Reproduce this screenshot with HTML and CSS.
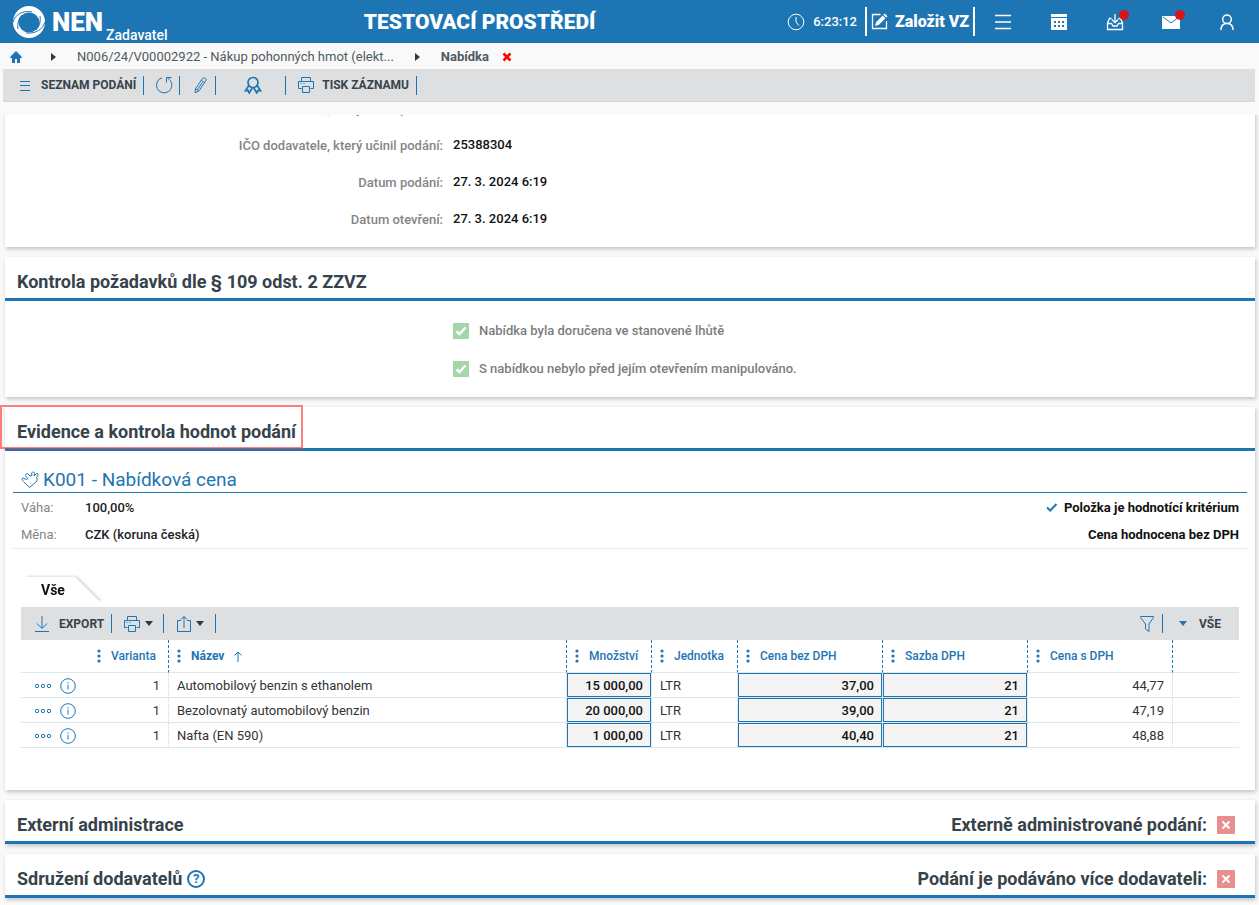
FILE: index.html
```html
<!DOCTYPE html>
<html lang="cs">
<head>
  <meta charset="UTF-8" />
  <meta name="viewport" content="width=device-width, initial-scale=1.0" />
  <title>NEN - Nabídka</title>
  <link rel="stylesheet" href="styles.css">
</head>
<body>

  <!-- Sdílené ikony -->
  <svg class="sprite" aria-hidden="true">
    <symbol id="i-print" viewBox="0 0 18 18">
      <path d="M4.5 5.5v-4h9v4M4.5 12.5h-3v-7h15v7h-3M5.5 10.5h7v6h-7zM3.5 7.5h1M6.5 7.5h1" />
    </symbol>
    <symbol id="i-dots" viewBox="0 0 4 14">
      <circle cx="2" cy="2" r="1.6" /><circle cx="2" cy="7" r="1.6" /><circle cx="2" cy="12" r="1.6" />
    </symbol>
    <symbol id="i-more" viewBox="0 0 18 6">
      <circle cx="3" cy="3" r="1.7" /><circle cx="9" cy="3" r="1.7" /><circle cx="15" cy="3" r="1.7" />
    </symbol>
    <symbol id="i-info" viewBox="0 0 16 16">
      <circle cx="8" cy="8" r="7.3" /><path d="M8 6.8v4.7M8 4.2v1.3" />
    </symbol>
    <symbol id="i-cross" viewBox="0 0 18 18">
      <path d="M5.5 5.5l7 7M12.5 5.5l-7 7" />
    </symbol>
    <symbol id="i-caret" viewBox="0 0 8 5"><path d="M0 0h8L4 5z" /></symbol>
    <symbol id="i-play" viewBox="0 0 5 8"><path d="M0 0l5 4-5 4z" /></symbol>
  </svg>

  <header class="topbar">
    <a class="logo" href="#">
      <svg width="32" height="32" viewBox="0 0 32 32">
        <path fill="#fff" fill-rule="evenodd" d="M16 0a16 16 0 1 0 0 32a16 16 0 1 0 0-32zM16 6.500a10.500 10 0 1 1 0 20a10.500 10 0 1 1 0-20z" />
        <path class="logo-cut" d="M0 16C2 9 9 4 19 6M32 16c-2 7-9 12-19 11M5 23C4 17 6 12 9 9M27 10c1 6-1 11-4 14" />
      </svg>
      <span class="logo-name">NEN</span>
      <span class="logo-role">Zadavatel</span>
    </a>
    <div class="env">TESTOVACÍ PROSTŘEDÍ</div>
    <div class="top-tools">
      <svg class="clock" width="18" height="18" viewBox="0 0 18 18"><circle cx="9" cy="9" r="7.800" /><path d="M9 4v5l3 3.500" /></svg>
      <span class="time">6:23:12</span>
      <button class="create" type="button">
        <svg width="17" height="17" viewBox="0 0 17 17"><path fill="none" stroke="#fff" stroke-width="1.300" d="M9.500 1.500h-8v14h14V8" /><path fill="#fff" d="M4 13l1.200-4 6.500-6.500 2.800 2.800L8 11.800zM12.400 1.800l1.400-1.300 2.700 2.700-1.300 1.400z" /></svg>
        Založit VZ
      </button>
      <button class="top-btn" type="button" aria-label="Menu">
        <svg width="18" height="18" viewBox="0 0 18 18"><path stroke="#fff" stroke-width="1.500" d="M1 2.500h16M1 9h16M1 15.500h16" /></svg>
      </button>
      <button class="top-btn" type="button" aria-label="Kalendář">
        <svg width="18" height="18" viewBox="0 0 18 18"><path fill="#fff" d="M1 1h16v3H1zM1 5h16v12H1z" /><path fill="#1e75b4" d="M4 8h2v2H4zM8 8h2v2H8zM12 8h2v2h-2zM4 12h2v2H4zM8 12h2v2H8zM12 12h2v2h-2z" /></svg>
      </button>
      <button class="top-btn" type="button" aria-label="Doručené">
        <svg width="18" height="18" viewBox="0 0 18 18"><path fill="none" stroke="#fff" stroke-width="1.300" d="M5.500 5.500H3.500L1.500 10v6.500h15V10l-2-4.500h-2M1.500 10.500h4l1.500 2.500h4l1.500-2.500h4M9 1v8.500M5.800 6.500L9 9.700l3.200-3.200" /></svg>
        <span class="badge"></span>
      </button>
      <button class="top-btn" type="button" aria-label="Zprávy">
        <svg width="18" height="18" viewBox="0 0 18 18"><path fill="#fff" d="M0 3h18v13H0z" /><path fill="none" stroke="#1e75b4" d="M1 4l8 6 8-6" /></svg>
        <span class="badge"></span>
      </button>
      <button class="top-btn" type="button" aria-label="Uživatel">
        <svg width="18" height="18" viewBox="0 0 18 18"><path fill="none" stroke="#fff" stroke-width="1.500" d="M9 10.500a4.300 4.300 0 1 1 0-8.600a4.300 4.300 0 0 1 0 8.600M3 17c0-4.500 2.500-6.500 6-6.500s6 2 6 6.500" /></svg>
      </button>
    </div>
  </header>

  <nav class="crumbs">
    <a class="home" href="#" aria-label="Domů"><svg width="12" height="12" viewBox="0 0 12 12"><path fill="#1e75b4" d="M6 0l6 6-.8.900H10V12H7V8H5v4H2V6.900H.800L0 6z" /></svg></a>
    <svg class="crumb-arrow" width="5" height="8"><use href="#i-play" /></svg>
    <a href="#">N006/24/V00002922 - Nákup pohonných hmot (elekt...</a>
    <svg class="crumb-arrow" width="5" height="8"><use href="#i-play" /></svg>
    <strong>Nabídka</strong>
    <button class="crumb-close" type="button" aria-label="Zavřít"><svg width="10" height="10" viewBox="0 0 10 10"><path stroke="#f00" stroke-width="2.600" d="M1.500 1.500l7 7M8.500 1.500l-7 7" /></svg></button>
  </nav>

  <div class="toolbar">
    <button class="tool tool-list" type="button">
      <svg class="line" width="12" height="12" viewBox="0 0 12 12"><path d="M1 2.500h10M1 6.500h10M1 11.500h10" /></svg>
      SEZNAM PODÁNÍ
    </button>
    <button class="tool tool-refresh" type="button" aria-label="Obnovit">
      <svg class="line" width="18" height="18" viewBox="0 0 18 18"><path d="M7 1.800A7.700 7.700 0 1 0 15.300 4.500L12.500 1.700M11.500 6.500v-5h5" /></svg>
    </button>
    <button class="tool tool-edit" type="button" aria-label="Upravit">
      <svg class="line" width="18" height="18" viewBox="0 0 18 18"><path d="M4 16.800l.5-4L11.500 2.500c1-1.500 4.500-.5 3.500 2L8 14.800zM10.500 4.500l3 2M4.500 12.800l3.500 2M11.500 6.500l-5 7" /></svg>
    </button>
    <button class="tool tool-award" type="button" aria-label="Podpis">
      <svg width="18" height="18" viewBox="0 0 18 18"><path fill="none" stroke="#1e75b4" stroke-width="1.700" d="M9 1.500a5 5 0 1 1 0 10a5 5 0 1 1 0-10zM4.500 10L1.500 14.800l2.500-.300 1.200 2.500 3-5M13.500 10l3 4.800-2.500-.300-1.200 2.500-3-5" /></svg>
    </button>
    <button class="tool tool-print" type="button">
      <svg class="line" width="18" height="18"><use href="#i-print" /></svg>
      TISK ZÁZNAMU
    </button>
  </div>

  <main class="content">
    <section class="panel panel-first">
      <dl class="fields">
        <dt>Název dodavatele, který učinil podání:</dt><dd></dd>
        <dt>IČO dodavatele, který učinil podání:</dt><dd>25388304</dd>
        <dt>Datum podání:</dt><dd>27. 3. 2024 6:19</dd>
        <dt>Datum otevření:</dt><dd>27. 3. 2024 6:19</dd>
      </dl>
    </section>

    <section class="panel">
      <div class="panel-head"><h2>Kontrola požadavků dle § 109 odst. 2 ZZVZ</h2></div>
      <div class="checks">
        <label><input type="checkbox" checked disabled> Nabídka byla doručena ve stanovené lhůtě</label>
        <label><input type="checkbox" checked disabled> S nabídkou nebylo před jejím otevřením manipulováno.</label>
      </div>
    </section>

    <section class="panel">
      <div class="panel-head"><h2 class="marked">Evidence a kontrola hodnot podání</h2></div>
      <div class="criterion">
        <h3>
          <svg class="line" width="18" height="18" viewBox="0 0 18 18"><path d="M8.500 16.500L2.500 10.500C.500 8.500.500 7.500 2 7l3.500 1.500L7 7.500 5 5.500C4 4 5 2 6.500 2.500L9 5 11 4.500 10.500 2C12 .500 13.500 1 13.500 2.500L13 5l2.500-2.500C17 2 17.500 4 16.500 5l-1 1.500c1 1.500.5 3.500-.5 4.500z" /></svg>
          K001 - Nabídková cena
        </h3>
        <div class="facts">
          <span class="fact-label">Váha:</span>
          <span class="fact-value">100,00%</span>
          <span class="fact-note"><svg width="12" height="9" viewBox="0 0 12 9"><path fill="none" stroke="#1e75b4" stroke-width="2" d="M1 4.500l3.300 3L10.500 1" /></svg>Položka je hodnotící kritérium</span>
          <span class="fact-label">Měna:</span>
          <span class="fact-value">CZK (koruna česká)</span>
          <span class="fact-note">Cena hodnocena bez DPH</span>
        </div>
      </div>

      <div class="grid">
        <div class="tab-wrap"><button class="tab" type="button">Vše</button></div>
        <div class="grid-bar">
          <button class="tool bar-export" type="button">
            <svg class="line" width="14" height="16" viewBox="0 0 14 16"><path d="M7 0v12M2 7.500l5 5 5-5M0 15.500h14" /></svg>
            EXPORT
          </button>
          <button class="tool bar-drop" type="button" aria-label="Tisk">
            <svg class="line" width="18" height="18"><use href="#i-print" /></svg>
            <svg class="caret" width="8" height="5"><use href="#i-caret" /></svg>
          </button>
          <button class="tool bar-drop" type="button" aria-label="Sdílet">
            <svg class="line" width="16" height="18" viewBox="0 0 16 18"><path d="M5 5.500H1.500v11h13v-11H11M8 13V1.500M5 4.500l3-3 3 3" /></svg>
            <svg class="caret" width="8" height="5"><use href="#i-caret" /></svg>
          </button>
          <button class="tool bar-filter" type="button" aria-label="Filtr">
            <svg class="line" width="14" height="16" viewBox="0 0 14 16"><path d="M.500.500h13v1L9 8v7.500L5.500 13V8L.500 1.500z" /></svg>
          </button>
          <button class="tool bar-all" type="button">
            <svg class="caret-blue" width="8" height="5"><use href="#i-caret" /></svg>
            VŠE
          </button>
        </div>
        <table>
          <colgroup>
            <col class="c-act"><col class="c-var"><col class="c-name"><col class="c-qty"><col class="c-unit"><col class="c-price"><col class="c-price"><col class="c-price"><col>
          </colgroup>
          <thead>
            <tr>
              <th class="plain"></th>
              <th><div><svg width="4" height="14"><use href="#i-dots" /></svg>Varianta</div></th>
              <th><div><svg width="4" height="14"><use href="#i-dots" /></svg><b>Název</b><svg class="sort" width="8" height="11" viewBox="0 0 8 11"><path d="M4 11V1M.500 4.500L4 1l3.500 3.500" /></svg></div></th>
              <th><div><svg width="4" height="14"><use href="#i-dots" /></svg>Množství</div></th>
              <th><div><svg width="4" height="14"><use href="#i-dots" /></svg>Jednotka</div></th>
              <th><div><svg width="4" height="14"><use href="#i-dots" /></svg>Cena bez DPH</div></th>
              <th><div><svg width="4" height="14"><use href="#i-dots" /></svg>Sazba DPH</div></th>
              <th><div><svg width="4" height="14"><use href="#i-dots" /></svg>Cena s DPH</div></th>
              <th class="plain"></th>
            </tr>
          </thead>
          <tbody>
            <tr>
              <td class="plain"><div class="acts"><button type="button" aria-label="Akce"><svg class="line" width="18" height="6"><use href="#i-more" /></svg></button><button type="button" aria-label="Detail"><svg class="line" width="16" height="16"><use href="#i-info" /></svg></button></div></td>
              <td class="num">1</td>
              <td>Automobilový benzin s ethanolem</td>
              <td class="edit"><input type="text" aria-label="Množství" value="15 000,00"></td>
              <td>LTR</td>
              <td class="edit"><input type="text" aria-label="Cena bez DPH" value="37,00"></td>
              <td class="edit"><input type="text" aria-label="Sazba DPH" value="21"></td>
              <td class="num">44,77</td>
              <td class="plain"></td>
            </tr>
            <tr>
              <td class="plain"><div class="acts"><button type="button" aria-label="Akce"><svg class="line" width="18" height="6"><use href="#i-more" /></svg></button><button type="button" aria-label="Detail"><svg class="line" width="16" height="16"><use href="#i-info" /></svg></button></div></td>
              <td class="num">1</td>
              <td>Bezolovnatý automobilový benzin</td>
              <td class="edit"><input type="text" aria-label="Množství" value="20 000,00"></td>
              <td>LTR</td>
              <td class="edit"><input type="text" aria-label="Cena bez DPH" value="39,00"></td>
              <td class="edit"><input type="text" aria-label="Sazba DPH" value="21"></td>
              <td class="num">47,19</td>
              <td class="plain"></td>
            </tr>
            <tr>
              <td class="plain"><div class="acts"><button type="button" aria-label="Akce"><svg class="line" width="18" height="6"><use href="#i-more" /></svg></button><button type="button" aria-label="Detail"><svg class="line" width="16" height="16"><use href="#i-info" /></svg></button></div></td>
              <td class="num">1</td>
              <td>Nafta (EN 590)</td>
              <td class="edit"><input type="text" aria-label="Množství" value="1 000,00"></td>
              <td>LTR</td>
              <td class="edit"><input type="text" aria-label="Cena bez DPH" value="40,40"></td>
              <td class="edit"><input type="text" aria-label="Sazba DPH" value="21"></td>
              <td class="num">48,88</td>
              <td class="plain"></td>
            </tr>
          </tbody>
        </table>
      </div>
    </section>

    <section class="panel">
      <div class="panel-head">
        <h2>Externí administrace</h2>
        <div class="state">Externě administrované podání:<svg width="18" height="18"><use href="#i-cross" /></svg></div>
      </div>
    </section>

    <section class="panel">
      <div class="panel-head">
        <h2>Sdružení dodavatelů</h2>
        <button class="help" type="button" aria-label="Nápověda">?</button>
        <div class="state">Podání je podáváno více dodavateli:<svg width="18" height="18"><use href="#i-cross" /></svg></div>
      </div>
    </section>
  </main>

</body>
</html>
```
FILE: styles.css
```css
* {
  box-sizing: border-box;
}

body {
  margin: 0;
  height: 100vh;
  display: flex;
  flex-direction: column;
  overflow: hidden;
  background: #f9f9f9;
  color: #111;
  font-family: Roboto, "Liberation Sans", sans-serif;
  font-size: 13px;
  line-height: 16px;
}

button {
  font: inherit;
  color: inherit;
  background: none;
  border: 0;
  margin: 0;
  padding: 0;
  cursor: pointer;
}

a {
  color: inherit;
  text-decoration: none;
}

svg {
  flex: none;
  display: block;
}

.sprite {
  position: absolute;
  width: 0;
  height: 0;
}

.line {
  fill: none;
  stroke: #1e75b4;
  stroke-width: 1;
}

/* Horní lišta */
.topbar {
  flex: none;
  display: grid;
  grid-template-columns: 178px 1fr auto;
  height: 43px;
  background: #1e75b4;
  color: #fff;
}

.logo {
  display: flex;
  align-items: center;
  padding-left: 13px;
}

.logo-cut {
  fill: none;
  stroke: #1e75b4;
  stroke-width: 1;
}

.logo-name {
  margin-left: 7px;
  font-size: 26px;
  font-weight: 900;
}

.logo-role {
  align-self: flex-end;
  margin-left: 3px;
  font-size: 14px;
  font-weight: 500;
}

.env {
  align-self: center;
  text-align: center;
  font-size: 21px;
  font-weight: 900;
}

.top-tools {
  display: flex;
  align-items: center;
  padding: 0 4px 0 6px;
}

.clock {
  fill: none;
  stroke: #fff;
}

.time {
  margin: 0 8px;
  font-weight: 500;
}

.create {
  display: flex;
  align-items: center;
  gap: 7px;
  height: 29px;
  padding: 0 4px;
  border: solid #fff;
  border-width: 0 2px;
  font-size: 16px;
  font-weight: 900;
}

.top-btn {
  position: relative;
  display: flex;
  justify-content: center;
  width: 56px;
}

.badge {
  position: absolute;
  top: -3px;
  right: 14px;
  width: 10px;
  height: 10px;
  border-radius: 50%;
  background: #d9141a;
}

/* Drobečková navigace */
.crumbs {
  flex: none;
  display: flex;
  align-items: center;
  height: 26px;
  padding: 1px 0 0 10px;
  color: #4f5a61;
}

.crumb-arrow {
  margin: 0 21px;
  fill: #2b3a42;
}

.home {
  margin-right: 8px;
}

.crumbs strong {
  font-weight: 700;
}

.crumb-close {
  margin-left: 13px;
}

/* Panel nástrojů */
.toolbar {
  flex: none;
  display: flex;
  align-items: center;
  height: 33px;
  margin: 0 4px 13px 3px;
  background: #dedfe1;
  border-bottom: 1px solid #d5d6d8;
}

.tool {
  display: flex;
  align-items: center;
  justify-content: center;
  height: 19px;
  border-right: 1px solid #1e75b4;
  color: #36434b;
  font-size: 12px;
  font-weight: 700;
}

.tool-list {
  gap: 10px;
  padding: 0 7px 0 16px;
}

.tool-refresh,
.tool-edit {
  width: 36px;
  padding-left: 4px;
}

.tool-award {
  width: 70px;
  padding-left: 4px;
}

.tool-print {
  gap: 7px;
  padding: 0 7px 0 11px;
}

/* Obsah */
.content {
  flex: 1;
  min-height: 0;
  overflow: hidden;
}

.panel {
  margin: 0 4px 10px 5px;
  background: #fff;
  box-shadow: 1px 2px 4px rgba(0, 0, 0, 0.22);
}

/* první sekce je odrolovaná nahoru */
.panel-first {
  margin-top: -25px;
  padding-bottom: 9px;
}

.fields {
  display: grid;
  grid-template-columns: 438px 1fr;
  grid-auto-rows: 37px;
  column-gap: 10px;
  align-items: center;
  margin: 0;
}

.fields dt {
  text-align: right;
  color: #858585;
  font-weight: 500;
}

.fields dd {
  margin: 0;
  padding-bottom: 2px;
  font-weight: 500;
  color: #111;
}

.panel-head {
  display: flex;
  align-items: center;
  height: 44px;
  padding: 8px 20px 0 12px;
  border-bottom: 3px solid #1e75b4;
  color: #36434b;
  font-size: 18px;
  line-height: 24px;
}

.panel-head h2 {
  margin: 0;
  font-size: 18px;
  font-weight: 700;
}

.marked {
  position: relative;
}

.marked::after {
  content: "";
  position: absolute;
  inset: -15px -7px -5px -17px;
  border: 2px solid rgba(255, 60, 60, 0.65);
}

.state {
  display: flex;
  align-items: center;
  gap: 10px;
  margin-left: auto;
  font-weight: 700;
}

.state svg {
  background: #e98e8e;
  border-radius: 1px;
  stroke: #fff;
  stroke-width: 2;
}

.help {
  width: 18px;
  height: 18px;
  margin-left: 5px;
  border: 2px solid #1e75b4;
  border-radius: 50%;
  color: #1e75b4;
  font-size: 13px;
  font-weight: 700;
  line-height: 14px;
}

.checks {
  display: flex;
  flex-direction: column;
  gap: 22px;
  padding: 22px 0 20px 448px;
}

.checks label {
  display: flex;
  align-items: center;
  gap: 10px;
  color: #7d7d7d;
  font-weight: 500;
}

.checks input {
  appearance: none;
  width: 16px;
  height: 16px;
  margin: 0;
  border-radius: 1px;
  background: #a5d6a7 url("data:image/svg+xml,%3Csvg xmlns='http://www.w3.org/2000/svg' viewBox='0 0 16 16'%3E%3Cpath d='M3.500 8.500l3 2.500 6-6.500' fill='none' stroke='white' stroke-width='2.400'/%3E%3C/svg%3E");
}

/* Kritérium */
.criterion {
  padding: 16px 8px 0;
}

.criterion h3 {
  display: flex;
  align-items: center;
  gap: 4px;
  margin: 0;
  padding: 0 8px;
  border-bottom: 1px solid #1e75b4;
  color: #1e75b4;
  font-size: 19px;
  font-weight: 400;
  line-height: 25px;
}

.facts {
  display: grid;
  grid-template-columns: 64px 1fr auto;
  grid-auto-rows: 27px;
  align-items: center;
  padding: 1px 8px 0;
  border-bottom: 1px solid #e8e8e8;
}

.fact-label {
  color: #858585;
}

.fact-value {
  color: #222;
  font-weight: 500;
}

.fact-note {
  display: flex;
  align-items: center;
  justify-content: flex-end;
  gap: 6px;
  font-weight: 700;
}

/* Tabulka položek */
.grid {
  padding: 28px 16px 42px;
}

.tab-wrap {
  margin: 0 0 5px 4px;
  filter: drop-shadow(2px -1px 1px rgba(0, 0, 0, 0.14));
}

.tab {
  display: block;
  width: 75px;
  height: 25px;
  padding: 1px 0 0 16px;
  background: #fff;
  clip-path: polygon(0 0, 50px 0, 100% 100%, 0 100%);
  text-align: left;
  color: #111;
  font-size: 14px;
  font-weight: 700;
}

.grid-bar {
  display: flex;
  align-items: center;
  height: 33px;
  background: #dedfe1;
}

.bar-export {
  gap: 10px;
  padding: 0 7px 0 14px;
}

.bar-drop {
  gap: 4px;
  width: 52px;
}

.caret {
  fill: #2b3a42;
}

.caret-blue {
  fill: #1e75b4;
}

.bar-filter {
  margin-left: auto;
  padding-right: 8px;
}

.bar-all {
  gap: 12px;
  padding: 0 18px 0 16px;
  border: 0;
}

table {
  width: 100%;
  table-layout: fixed;
  border-collapse: separate;
  border-spacing: 0;
}

.c-act { width: 63px; }
.c-var { width: 85px; }
.c-name { width: 398px; }
.c-qty { width: 85px; }
.c-unit { width: 86px; }
.c-price { width: 145px; }

th {
  height: 33px;
  padding: 0 0 0 8px;
  border-right: 1px dashed #1e75b4;
  border-bottom: 1px solid #dde8ea;
  color: #1e75b4;
  font-size: 12px;
  font-weight: 500;
  text-align: left;
}

th div {
  display: flex;
  align-items: center;
  gap: 10px;
}

th svg {
  fill: #1e75b4;
}

th b {
  font-weight: 700;
}

th .sort {
  fill: none;
  stroke: #1e75b4;
}

th:nth-child(2) {
  padding-left: 13px;
}

td {
  height: 25px;
  padding: 1px 8px 0;
  border-right: 1px dotted #d3d3d3;
  border-bottom: 1px solid #dde8ea;
  color: #333;
}

th.plain {
  padding: 0;
  border-right: 0;
}

td.plain {
  padding: 1px 0 0;
  border-right: 0;
}

td.num {
  text-align: right;
}

td.edit {
  padding: 0;
}

td.edit input {
  display: block;
  width: 100%;
  height: 24px;
  padding: 0 7px;
  border: 1px solid #1e75b4;
  border-radius: 0;
  background: #f4f4f4;
  color: #111;
  font: inherit;
  font-weight: 500;
  text-align: right;
}

.acts {
  display: flex;
  align-items: center;
  gap: 8px;
  padding-left: 13px;
}
```
